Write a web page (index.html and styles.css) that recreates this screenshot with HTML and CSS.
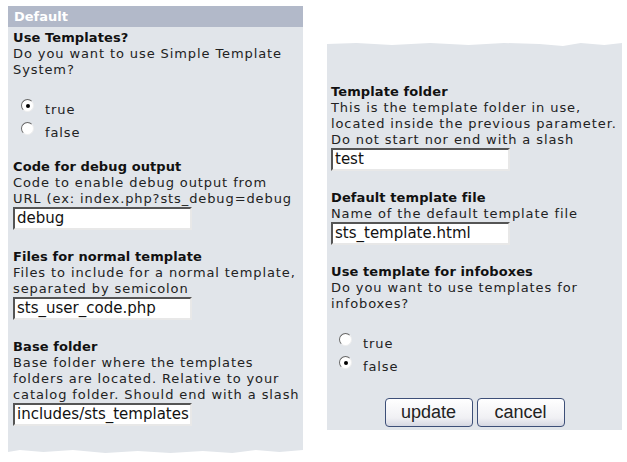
FILE: index.html
```html
<!DOCTYPE html>
<html lang="en">
<head>
    <meta charset="UTF-8">
    <title>STS Configuration</title>
    <link rel="stylesheet" href="styles.css">
</head>
<body>
    <div class="page">
        <div class="panel panel-left">
            <div class="panel-title">Default</div>
            <div class="panel-body">
                <div class="field field-radio">
                    <div class="field-name">Use Templates?</div>
                    <div class="field-desc">Do you want to use Simple Template<br>System?</div>
                    <div class="options">
                        <label class="option"><span class="radio checked"></span><span>true</span></label>
                        <label class="option"><span class="radio"></span><span>false</span></label>
                    </div>
                </div>
                <div class="field">
                    <div class="field-name">Code for debug output</div>
                    <div class="field-desc">Code to enable debug output from<br>URL (ex: index.php?sts_debug=debug</div>
                    <div class="text-input">debug</div>
                </div>
                <div class="field">
                    <div class="field-name">Files for normal template</div>
                    <div class="field-desc">Files to include for a normal template,<br>separated by semicolon</div>
                    <div class="text-input">sts_user_code.php</div>
                </div>
                <div class="field">
                    <div class="field-name">Base folder</div>
                    <div class="field-desc">Base folder where the templates<br>folders are located. Relative to your<br>catalog folder. Should end with a slash</div>
                    <div class="text-input">includes/sts_templates</div>
                </div>
            </div>
        </div>

        <div class="panel panel-right">
            <div class="panel-body">
                <div class="field">
                    <div class="field-name">Template folder</div>
                    <div class="field-desc">This is the template folder in use,<br>located inside the previous parameter.<br>Do not start nor end with a slash</div>
                    <div class="text-input">test</div>
                </div>
                <div class="field">
                    <div class="field-name">Default template file</div>
                    <div class="field-desc">Name of the default template file</div>
                    <div class="text-input">sts_template.html</div>
                </div>
                <div class="field">
                    <div class="field-name">Use template for infoboxes</div>
                    <div class="field-desc">Do you want to use templates for<br>infoboxes?</div>
                    <div class="options">
                        <label class="option"><span class="radio"></span><span>true</span></label>
                        <label class="option"><span class="radio checked"></span><span>false</span></label>
                    </div>
                </div>
                <div class="button-row">
                    <button type="button" class="btn">update</button>
                    <button type="button" class="btn">cancel</button>
                </div>
            </div>
        </div>
    </div>
</body>
</html>
```

FILE: styles.css
```css
body, html {
    margin: 0;
    background-color: #fff;
}
.page {
    display: flex;
    align-items: flex-start;
    font-family: "DejaVu Sans", Verdana, sans-serif;
    font-size: 13px;
    line-height: 16px;
    color: #222;
}
.panel {
    background-color: #e1e5ea;
    overflow: hidden;
    white-space: nowrap;
}
.panel-left {
    width: 295px;
    height: 447px;
    margin: 6px 0 0 8px;
    /* torn paper edge at the bottom */
    clip-path: polygon(0 0, 100% 0, 100% 444px, 92% 446px, 84% 444px, 76% 447px, 66% 445px, 55% 447px, 44% 445px, 33% 447px, 22% 444px, 12% 446px, 4% 444px, 0 446px);
}
.panel-right {
    width: 295px;
    height: 387px;
    margin: 43px 0 0 24px;
    /* torn paper edge at the top */
    clip-path: polygon(0 1px, 10% 0, 22% 2px, 35% 0, 48% 2px, 60% 0, 72% 1px, 80% 3px, 86% 0, 94% 2px, 100% 0, 100% 100%, 0 100%);
}
.panel-title {
    height: 21px;
    line-height: 21px;
    padding-left: 6px;
    background-color: #b2b9c9;
    color: #fff;
    font-weight: bold;
}
.panel-left .panel-body {
    padding: 3px 5px 0 5px;
}
.panel-right .panel-body {
    padding: 41px 0 0 4px;
}
.field {
    margin-bottom: 19px;
}
.field-radio {
    margin-bottom: 14px;
}
.field-name {
    font-weight: bold;
    color: #111;
    letter-spacing: 0.1px;
}
.field-desc {
    letter-spacing: 0.9px;
}
.text-input {
    box-sizing: border-box;
    width: 179px;
    height: 23px;
    line-height: 19px;
    padding: 0 2px;
    background-color: #fff;
    border: 2px solid;
    border-color: #555 #e8e8e8 #e8e8e8 #555;
    color: #111;
    font-size: 15px;
    overflow: hidden;
}
.options {
    margin-top: 21px;
    letter-spacing: 0.9px;
}
.option {
    display: flex;
    align-items: flex-start;
    height: 23px;
}
.option span:last-child {
    margin-top: 3px;
}
.radio {
    box-sizing: border-box;
    width: 13px;
    height: 13px;
    margin: 0 11px 0 8px;
    border-radius: 50%;
    background-color: #fff;
    border: 1px solid;
    border-color: #666 #eee #eee #666;
    display: flex;
    align-items: center;
    justify-content: center;
}
.radio.checked::after {
    content: "";
    width: 4px;
    height: 4px;
    border-radius: 50%;
    background-color: #000;
}
.button-row {
    display: flex;
    justify-content: center;
    gap: 4px;
    margin: 17px 4px 0 0;
}
.btn {
    width: 88px;
    height: 29px;
    font-family: "Liberation Sans", Arial, sans-serif;
    font-size: 18px;
    color: #222;
    border: 1px solid #3d4f78;
    border-radius: 4px;
    background: linear-gradient(#ffffff, #f0f0f4 70%, #d6d8e2);
    padding: 0;
    cursor: pointer;
}
```
